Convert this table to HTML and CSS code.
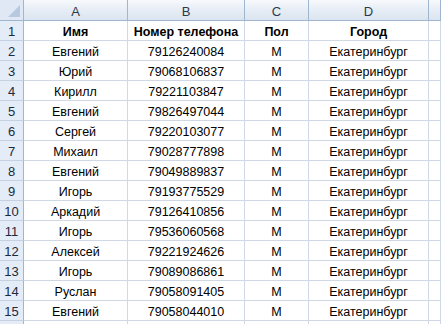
FILE: index.html
```html
<!DOCTYPE html>
<html>
<head>
<meta charset="utf-8">
<link rel="stylesheet" href="styles.css">
</head>
<body>
<div class="sheet">
  <div class="corner"><span class="tri"></span></div>
  <div class="colh">A</div><div class="colh">B</div><div class="colh">C</div><div class="colh">D</div><div class="colh last"></div>

  <div class="rowh">1</div><div class="c b">Имя</div><div class="c b">Номер телефона</div><div class="c b">Пол</div><div class="c b">Город</div><div class="c"></div>
  <div class="rowh">2</div><div class="c">Евгений</div><div class="c">79126240084</div><div class="c">М</div><div class="c">Екатеринбург</div><div class="c"></div>
  <div class="rowh">3</div><div class="c">Юрий</div><div class="c">79068106837</div><div class="c">М</div><div class="c">Екатеринбург</div><div class="c"></div>
  <div class="rowh">4</div><div class="c">Кирилл</div><div class="c">79221103847</div><div class="c">М</div><div class="c">Екатеринбург</div><div class="c"></div>
  <div class="rowh">5</div><div class="c">Евгений</div><div class="c">79826497044</div><div class="c">М</div><div class="c">Екатеринбург</div><div class="c"></div>
  <div class="rowh">6</div><div class="c">Сергей</div><div class="c">79220103077</div><div class="c">М</div><div class="c">Екатеринбург</div><div class="c"></div>
  <div class="rowh">7</div><div class="c">Михаил</div><div class="c">79028777898</div><div class="c">М</div><div class="c">Екатеринбург</div><div class="c"></div>
  <div class="rowh">8</div><div class="c">Евгений</div><div class="c">79049889837</div><div class="c">М</div><div class="c">Екатеринбург</div><div class="c"></div>
  <div class="rowh">9</div><div class="c">Игорь</div><div class="c">79193775529</div><div class="c">М</div><div class="c">Екатеринбург</div><div class="c"></div>
  <div class="rowh">10</div><div class="c">Аркадий</div><div class="c">79126410856</div><div class="c">М</div><div class="c">Екатеринбург</div><div class="c"></div>
  <div class="rowh">11</div><div class="c">Игорь</div><div class="c">79536060568</div><div class="c">М</div><div class="c">Екатеринбург</div><div class="c"></div>
  <div class="rowh">12</div><div class="c">Алексей</div><div class="c">79221924626</div><div class="c">М</div><div class="c">Екатеринбург</div><div class="c"></div>
  <div class="rowh">13</div><div class="c">Игорь</div><div class="c">79089086861</div><div class="c">М</div><div class="c">Екатеринбург</div><div class="c"></div>
  <div class="rowh">14</div><div class="c">Руслан</div><div class="c">79058091405</div><div class="c">М</div><div class="c">Екатеринбург</div><div class="c"></div>
  <div class="rowh">15</div><div class="c">Евгений</div><div class="c">79058044010</div><div class="c">М</div><div class="c">Екатеринбург</div><div class="c"></div>
  <div class="rowh"></div><div class="c"></div><div class="c"></div><div class="c"></div><div class="c"></div><div class="c"></div>
</div>
</body>
</html>
```

FILE: styles.css
```css
html, body {
  margin: 0;
  padding: 0;
  background: #ffffff;
  overflow: hidden;
}
.sheet {
  display: grid;
  grid-template-columns: 24px 104px 117px 64px 120px 12px;
  grid-template-rows: 21px;
  grid-auto-rows: 20px;
  height: 324px;
  overflow: hidden;
  font-family: "Liberation Sans", Arial, sans-serif;
  font-size: 12.5px;
  color: #000;
}
.sheet > div {
  box-sizing: border-box;
  display: flex;
  align-items: center;
  justify-content: center;
  border-right: 1px solid #d0d7e5;
  border-bottom: 1px solid #d0d7e5;
  padding-top: 2px;
}
.sheet > .corner {
  position: relative;
  background: #dfe8f4;
  border-right: 1px solid #9eb6ce;
  border-bottom: 1px solid #9eb6ce;
}
.tri {
  position: absolute;
  right: 3px;
  bottom: 3px;
  width: 0;
  height: 0;
  border-left: 12px solid transparent;
  border-bottom: 12px solid #b7c9df;
}
.sheet > .colh {
  background: linear-gradient(#f7f9fc, #e8eef6 45%, #dbe4ef);
  border-right: 1px solid #9eb6ce;
  border-bottom: 1px solid #9eb6ce;
  color: #2b3a4c;
  font-size: 13px;
}
.sheet > .rowh {
  background: #e4ecf7;
  border-right: 1px solid #9eb6ce;
  border-bottom: 1px solid #c5d1e0;
  color: #1c2a3c;
  font-size: 13px;
}
.sheet > .b {
  font-weight: bold;
}
```
